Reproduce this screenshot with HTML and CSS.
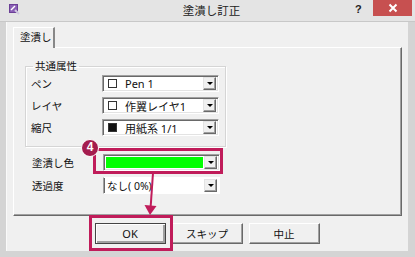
FILE: index.html
```html
<!DOCTYPE html>
<html lang="ja">
<head>
<meta charset="utf-8">
<link rel="stylesheet" href="styles.css">
</head>
<body>
<div class="win">
  <div class="titlebar">
    <svg class="appicon" width="11" height="11" viewBox="0 0 11 11">
      <rect x="0.5" y="0.5" width="8" height="8" fill="#8a5fb5" stroke="#6b3f96"/>
      <path d="M2 6 L6 2" stroke="#fff" stroke-width="1.5"/>
      <path d="M6 6 L10 10" stroke="#d0c8e0" stroke-width="2"/>
    </svg>
    <div class="title">塗潰し訂正</div>
    <div class="help">?</div>
    <div class="close">
      <svg width="10" height="10" viewBox="0 0 10 10"><path d="M1.5 1.5 L8.5 8.5 M8.5 1.5 L1.5 8.5" stroke="#fff" stroke-width="2"/></svg>
    </div>
  </div>
  <div class="client">
    <div class="tabs"><div class="tab">塗潰し</div></div>
    <div class="panel">
      <fieldset class="group">
        <legend>共通属性</legend>
        <div class="row">
          <span class="label">ペン</span>
          <div class="combo"><span class="sw white"></span><span class="val">Pen 1</span><span class="drop"></span></div>
        </div>
        <div class="row">
          <span class="label">レイヤ</span>
          <div class="combo"><span class="sw white"></span><span class="val">作翼レイヤ1</span><span class="drop"></span></div>
        </div>
        <div class="row">
          <span class="label">縮尺</span>
          <div class="combo"><span class="sw black"></span><span class="val">用紙系 1/1</span><span class="drop"></span></div>
        </div>
      </fieldset>
      <div class="row free">
        <span class="label">塗潰し色</span>
        <div class="combo"><span class="green"></span><span class="drop"></span></div>
      </div>
      <div class="row free">
        <span class="label">透過度</span>
        <div class="combo flat"><span class="val">なし( 0%)</span><span class="drop"></span></div>
      </div>
    </div>
    <div class="buttons">
      <div class="btn default">OK</div>
      <div class="btn">スキップ</div>
      <div class="btn">中止</div>
    </div>
  </div>
  <div class="hl hl-color"></div>
  <div class="hl hl-ok"></div>
  <div class="badge">4</div>
  <svg class="arrow" width="20" height="46" viewBox="0 0 20 46">
    <path d="M11 0 L8.5 36" stroke="#c01c5a" stroke-width="2" fill="none"/>
    <path d="M2.5 32 L14.5 33 L8 42 Z" fill="#c01c5a"/>
  </svg>
</div>
</body>
</html>
```
FILE: styles.css
```css
* { box-sizing: border-box; }
html, body { margin: 0; padding: 0; }
body {
  width: 415px;
  height: 257px;
  overflow: hidden;
  font-family: "Noto Sans", "Noto Sans CJK JP", sans-serif;
  font-size: 10px;
  color: #111;
}
.win {
  position: relative;
  width: 415px;
  height: 257px;
  background: #d4d4d4;
  padding: 0 7px 6px 6px;
  display: flex;
  flex-direction: column;
}
.titlebar {
  height: 22px;
  margin: 0 -7px 0 -6px;
  padding-left: 9px;
  display: flex;
  align-items: flex-start;
  background: #e4e4e4;
  border-bottom: 1px solid #c8c8c8;
}
.appicon { margin-top: 4px; }
.title {
  flex: 1;
  text-align: center;
  font-family: "Noto Sans CJK JP", sans-serif;
  font-size: 11.5px;
  line-height: 20px;
  padding-left: 48px;
  color: #222;
}
.help {
  width: 12px;
  font-family: "Liberation Sans", sans-serif;
  font-weight: bold;
  font-size: 11px;
  line-height: 18px;
  margin-right: 6px;
  color: #222;
}
.close {
  width: 39px;
  height: 16px;
  margin-right: 3px;
  background: #c75050;
  display: flex;
  align-items: center;
  justify-content: center;
}
.client {
  flex: 1;
  background: #f0f0f0;
  border-left: 1px solid #fafafa;
  padding: 5px 6px 0 6px;
  display: flex;
  flex-direction: column;
}
.tabs { display: flex; height: 20px; }
.tab {
  width: 42px;
  height: 21px;
  background: #f0f0f0;
  border-top: 1px solid #fff;
  border-left: 1px solid #fff;
  border-right: 2px solid #888;
  font-family: "Noto Sans CJK JP", sans-serif;
  font-size: 10.5px;
  line-height: 18px;
  padding-left: 6px;
  position: relative;
  z-index: 1;
}
.panel {
  height: 169px;
  border-top: 1px solid #fff;
  border-left: 1px solid #fff;
  border-right: 1px solid #696969;
  border-bottom: 1px solid #696969;
  box-shadow: inset -1px -1px 0 #a0a0a0;
  padding: 12px 0 0 11px;
}
.group {
  margin: 0;
  width: 201px;
  height: 87px;
  border: 1px solid #d5d5d5;
  box-shadow: 1px 1px 0 #fff, inset 1px 1px 0 #fff;
  padding: 3px 6px 0 5px;
  display: flex;
  flex-direction: column;
  gap: 5px;
}
.group legend {
  font-family: "Noto Sans CJK JP", sans-serif;
  font-size: 10.5px;
  padding: 0 2px;
  margin-left: 2px;
  line-height: 12px;
}
.row {
  display: flex;
  align-items: center;
  height: 17px;
}
.row.free { margin-left: 7px; }
.row.free:first-of-type { margin-top: 7px; }
.row.free + .row.free { margin-top: 6px; }
.label {
  width: 71px;
  font-family: "Noto Sans CJK JP", sans-serif;
  font-size: 10.5px;
}
.combo {
  width: 117px;
  height: 17px;
  background: #fff;
  border-top: 1px solid #a0a0a0;
  border-left: 1px solid #a0a0a0;
  border-right: 1px solid #fff;
  border-bottom: 1px solid #fff;
  box-shadow: inset 1px 1px 0 #696969, inset -1px -1px 0 #e3e3e3;
  display: flex;
  align-items: center;
  padding: 2px 2px 2px 5px;
  font-family: "Noto Sans", "Noto Sans CJK JP", sans-serif;
  font-size: 11px;
}
.combo.flat {
  border-top-color: transparent;
  box-shadow: inset 1px 0 0 #696969;
  padding-left: 3px;
  font-size: 10.5px;
}
.sw {
  width: 9px;
  height: 9px;
  margin-right: 8px;
  border: 1px solid #333;
  flex: none;
}
.sw.white { background: #fff; }
.sw.black { background: #111; }
.val { flex: 1; white-space: nowrap; }
.green {
  flex: 1;
  height: 11px;
  background: #00ff00;
  margin-left: -3px;
  margin-right: 1px;
}
.drop {
  width: 13px;
  height: 13px;
  flex: none;
  background: #f0f0f0;
  border-top: 1px solid #e3e3e3;
  border-left: 1px solid #e3e3e3;
  border-right: 1px solid #696969;
  border-bottom: 1px solid #696969;
  box-shadow: inset -1px -1px 0 #a0a0a0;
  position: relative;
}
.drop::after {
  content: "";
  position: absolute;
  left: 3px;
  top: 4px;
  border-left: 3px solid transparent;
  border-right: 3px solid transparent;
  border-top: 3px solid #000;
}
.buttons {
  display: flex;
  justify-content: center;
  gap: 6px;
  margin-top: 7px;
  padding-right: 1px;
}
.btn {
  width: 71px;
  height: 21px;
  background: #f0f0f0;
  border-top: 1px solid #fff;
  border-left: 1px solid #fff;
  border-right: 1px solid #696969;
  border-bottom: 1px solid #696969;
  box-shadow: inset -1px -1px 0 #a0a0a0;
  text-align: center;
  font-family: "Noto Sans CJK JP", sans-serif;
  font-size: 10.5px;
  line-height: 19px;
}
.btn.default {
  border: 1px solid #444;
  box-shadow: inset 1px 1px 0 #fff, inset -2px -2px 0 #a0a0a0;
  font-family: "Noto Sans", sans-serif;
  font-size: 11px;
}
.hl {
  position: absolute;
  border: 3px solid #c01c5a;
}
.hl-color { left: 93px; top: 148px; width: 130px; height: 26px; }
.hl-ok { left: 89px; top: 215px; width: 84px; height: 36px; }
.badge {
  position: absolute;
  left: 81px;
  top: 139px;
  width: 18px;
  height: 18px;
  border-radius: 50%;
  background: #a41c4e;
  border: 1.5px solid #fff;
  color: #fff;
  font-family: "Liberation Sans", sans-serif;
  font-weight: bold;
  font-size: 12px;
  line-height: 15px;
  text-align: center;
}
.arrow {
  position: absolute;
  left: 142px;
  top: 173px;
}
```
